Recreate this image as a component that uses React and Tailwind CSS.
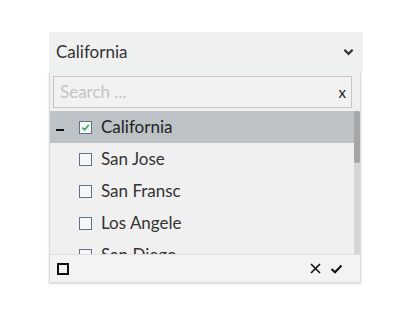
import React from "react";

const cities = ["San Jose", "San Fransc", "Los Angele", "San Diego"];

const Box = ({ checked }) => (
  <span className="w-[13px] h-[13px] border border-[#5b7289] bg-[#f7f7f7] flex items-center justify-center shrink-0">
    {checked && (
      <svg width="9" height="9" viewBox="0 0 10 10">
        <path d="M1.5 5.2 L4 7.6 L8.6 2.2" fill="none" stroke="#2fa84f" strokeWidth="1.8" />
      </svg>
    )}
  </span>
);

const App = () => {
  return (
    <div className="w-[414px] h-[334px] bg-white pt-[32px] pl-[49px]" style={{ fontFamily: "Lato, 'Open Sans', sans-serif" }}>
      <div className="w-[314px]">
        <div className="h-[40px] bg-[#eff0f0] flex items-center justify-between pl-[7px] pr-[9px] text-[17px] text-[#333]">
          <span>California</span>
          <svg width="11" height="8" viewBox="0 0 12 8">
            <path d="M1.5 1.5 L6 6 L10.5 1.5" fill="none" stroke="#333" strokeWidth="2.4" />
          </svg>
        </div>
        <div className="w-[312px] bg-[#f0f0f0] border-l border-r border-b border-[#dcdcdc] shadow-[0_1px_2px_rgba(0,0,0,0.15)]">
          <div className="pl-[3px] pr-[8px] pt-[4px] pb-[3px]">
            <div className="h-[32px] border border-[#c6c6c6] bg-[#f2f2f2] flex items-center justify-between pl-[6px] pr-[5px]">
              <span className="text-[17px] text-[#c4c4c4]">Search ...</span>
              <span className="text-[15px] text-[#222]">x</span>
            </div>
          </div>
          <div className="h-[143px] flex overflow-hidden">
            <div className="flex-1">
              <div className="h-[32px] bg-[#bdc2c6] flex items-center text-[17px] text-[#222]">
                <span className="w-[8px] h-[2.5px] bg-[#111] ml-[6px] mt-[6px]" />
                <span className="ml-[15px]"><Box checked /></span>
                <span className="ml-[9px]">California</span>
              </div>
              {cities.map((c) => (
                <div key={c} className="h-[32px] flex items-center text-[17px] text-[#333]">
                  <span className="ml-[29px]"><Box /></span>
                  <span className="ml-[9px]">{c}</span>
                </div>
              ))}
            </div>
            <div className="w-[6px] bg-[#d6d6d6]">
              <div className="h-[52px] bg-[#a6a6a6] rounded-[2px]" />
            </div>
          </div>
          <div className="h-[28px] border-t border-[#dedede] bg-[#f3f3f3] flex items-center justify-between pl-[7px] pr-[17px]">
            <span className="w-[12px] h-[12px] border-2 border-[#111]" />
            <div className="flex items-center gap-[9px]">
              <svg width="11" height="11" viewBox="0 0 11 11">
                <path d="M1 1 L10 10 M10 1 L1 10" stroke="#111" strokeWidth="1.6" />
              </svg>
              <svg width="13" height="10" viewBox="0 0 13 10">
                <path d="M1.5 5 L5 8.3 L11.5 1.5" fill="none" stroke="#111" strokeWidth="2" />
              </svg>
            </div>
          </div>
        </div>
      </div>
    </div>
  );
};

export default App;
